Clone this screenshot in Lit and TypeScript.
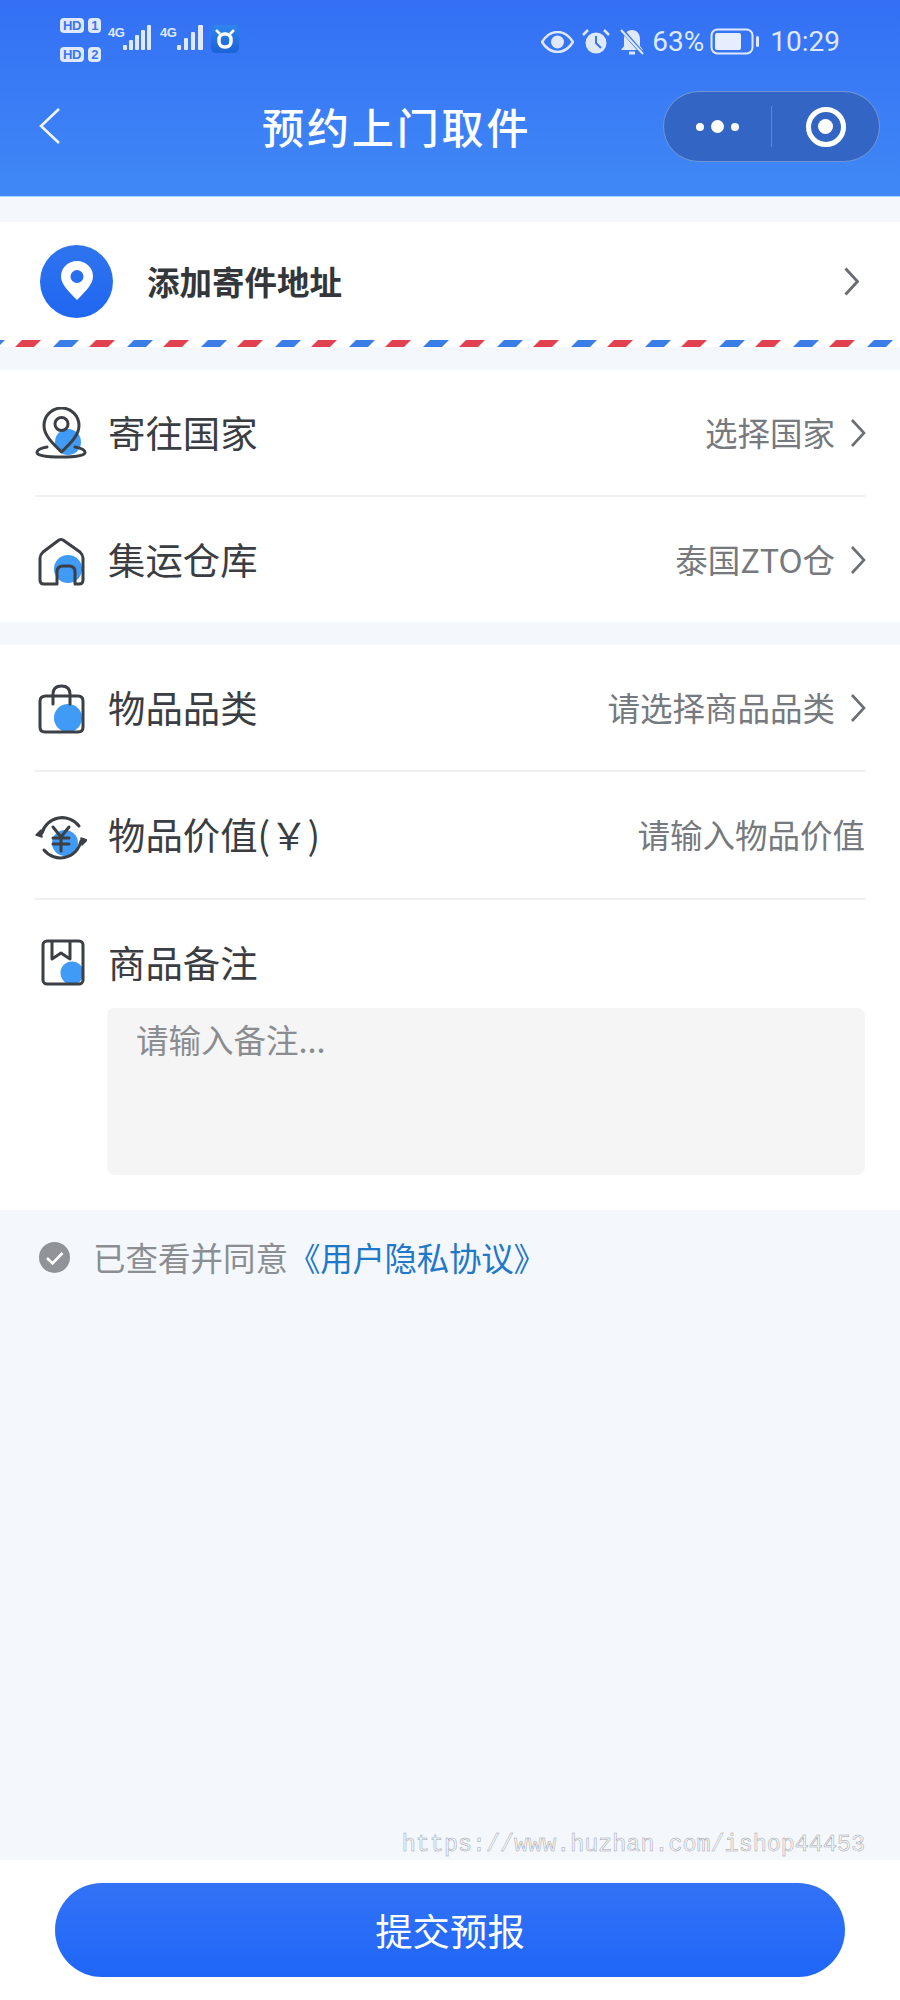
import { LitElement, html, css, svg } from "lit";
import { customElement } from "lit/decorators.js";

const BLUE = "#3f9bf5";
const INK = "#3c3f44";
const PALE = "#dfe9fb";

const chevron = html`<svg class="chev" width="16" height="30" viewBox="0 0 16 30"><path d="M2 2l12 13L2 28" fill="none" stroke="#6b6e72" stroke-width="2.600"/></svg>`;

const icon = (inner: unknown) => html`<svg class="ico" width="52" height="52" viewBox="0 0 52 52" fill="none" stroke="${INK}" stroke-width="3" stroke-linejoin="round" stroke-linecap="round">${inner}</svg>`;

const icons = {
  pin: icon(svg`<circle cx="33" cy="35" r="13" fill="${BLUE}" stroke="none"/>
    <path d="M26.500 45C17 36 9 28 9 18.500a17.500 17.500 0 0 1 35 0C44 28 36 36 26.500 45Z"/>
    <circle cx="26.500" cy="17" r="6.500"/>
    <path d="M12 40C6 41 2 43 2 45.500 2 48.500 12 50 26 50s24-1.500 24-4.500c0-2.500-4-4.500-10-5.500"/>`),
  house: icon(svg`<circle cx="33" cy="35" r="14" fill="${BLUE}" stroke="none"/>
    <path d="M5 46V24q0-3 3-6L24 6q2-1 4 0l17 12q3 3 3 6v22q0 4-4 4h-4V38q0-6-6-6h-6q-6 0-6 6v12H9q-4 0-4-4Z"/>`),
  bag: icon(svg`<circle cx="33" cy="36" r="14" fill="${BLUE}" stroke="none"/>
    <path d="M11 14h32q5 0 5 5v26q0 5-5 5H10q-5 0-5-5V19q0-5 6-5Z"/>
    <path d="M18 22V12q0-8 8.500-8T35 12v10"/>`),
  yuan: icon(svg`<circle cx="30" cy="34" r="13" fill="${BLUE}" stroke="none"/>
    <path d="M7 24A21 21 0 0 1 44 17"/><path d="M46 32A21 21 0 0 1 9 41"/>
    <path d="M1 26l5-5 1 7Z" fill="${INK}" stroke-width="1.500"/><path d="M52 31l-5 5-1-7Z" fill="${INK}" stroke-width="1.500"/>
    <path d="M18 18l8 10 8-10M26 28v14M18 29h16M18 35h16"/>`),
  note: icon(svg`<circle cx="37" cy="36" r="11.500" fill="${BLUE}" stroke="none"/>
    <rect x="8" y="4" width="40" height="43" rx="4"/>
    <path d="M17 5v17l9-6 9 6V5"/>`),
};

const bars = (items: [number, number, number][], w: number) => html`<svg width="${w}" height="28" viewBox="0 0 ${w} 28" fill="${PALE}">
  ${items.map(([x, bw, h]) => svg`<rect x="${x}" y="${26 - h}" width="${bw}" height="${h}" rx="1"/>`)}
</svg>`;

@customElement("app-root")
export class AppRoot extends LitElement {
  static styles = css`
    :host { display: block; width: 900px; height: 2000px; font-family: "Noto Sans CJK SC", "Noto Sans", sans-serif; }
    .page { height: 2000px; display: flex; flex-direction: column; background: #f4f7fb; color: #33363a; }
    .head { height: 197px; box-sizing: border-box; background: linear-gradient(180deg, #3370f4, #4088f6); border-bottom: 1px solid #a9d4fb; color: #fff; display: flex; flex-direction: column; }
    .status { height: 91px; box-sizing: border-box; padding: 18px 60px 0 60px; display: flex; justify-content: space-between; align-items: flex-start; color: #dfe9fb; }
    .sl, .sr { display: flex; align-items: flex-start; }
    .sr { align-items: center; }
    .hds { display: flex; flex-direction: column; gap: 14px; width: 48px; }
    .hdr { display: flex; gap: 4px; }
    .pill { font: 700 13px/15px "Liberation Sans", sans-serif; letter-spacing: -.3px; background: #dfe9fb; color: #3a76f0; border-radius: 4px; padding: 0 3px; height: 15px; }
    .net { display: flex; position: relative; width: 44px; height: 30px; margin: 6px 8px 0 0; justify-content: flex-end; }
    .net b { position: absolute; left: 0; top: 2px; font: 700 13px/13px "Liberation Sans", sans-serif; letter-spacing: -.6px; color: #dfe9fb; }
    .app { width: 28px; height: 28px; border-radius: 5px; background: linear-gradient(180deg, #2f86ee, #1a62d6); display: flex; align-items: center; justify-content: center; margin: 7px 0 0 -1px; }
    .sr { margin-top: 7px; height: 34px; font: 400 28px/34px Roboto, sans-serif; color: #dfe9fb; }
    .nav { flex: 1; display: grid; grid-template-columns: 224px auto 1fr; align-items: flex-start; padding: 0 20px 0 38px; }
    .back { margin-top: 16px; }
    .title { font-size: 42px; line-height: 56px; font-weight: 500; letter-spacing: 2.900px; margin-top: 7px; }
    .capsule { justify-self: end; width: 217px; height: 71px; box-sizing: border-box; border-radius: 36px; background: #3366c4; border: 1px solid rgba(255,255,255,.3); display: flex; align-items: center; }
    .capsule > div { flex: 1; display: flex; align-items: center; justify-content: center; gap: 7px; }
    .capsule .sep { flex: none; width: 1px; height: 41px; background: rgba(255,255,255,.22); }
    .dot { width: 8px; height: 8px; border-radius: 50%; background: #fff; }
    .dot.big { width: 13px; height: 13px; }
    .ring { width: 40px; height: 40px; box-sizing: border-box; border-radius: 50%; border: 5px solid #fff; display: flex; align-items: center; justify-content: center; }
    .ring i { width: 15px; height: 15px; border-radius: 50%; background: #fff; }
    .addr { margin-top: 25px; background: #fff; }
    .addr-row { height: 118px; box-sizing: border-box; display: flex; align-items: center; padding: 0 41px 0 40px; }
    .addr-ic { width: 73px; height: 73px; border-radius: 50%; background: linear-gradient(180deg, #2f74ee, #1f66f2); display: flex; align-items: center; justify-content: center; margin-right: 34px; }
    .addr-t { flex: 1; font-size: 32.500px; font-weight: 700; line-height: 40px; color: #33363a; }
    .stripe { display: block; }
    .sec { background: #fff; padding: 0 35px; }
    .s1 { margin-top: 23px; }
    .s2 { margin-top: 23px; height: 565px; box-sizing: border-box; }
    .row { height: 127px; box-sizing: border-box; border-bottom: 2px solid #eef0f2; display: flex; align-items: center; }
    .row.last { border-bottom: none; height: 125px; }
    .row.mid { height: 128px; }
    .lab { margin: 0 0 2px 21px; flex: 1; font-size: 37.400px; line-height: 50px; color: #3a3d41; }
    .val { margin-bottom: 2px; font-size: 32.500px; line-height: 44px; color: #76797d; }
    .chev { margin-left: 15px; margin-right: -1px; }
    .note-top { height: 108px; display: flex; align-items: center; padding-top: 18px; box-sizing: border-box; }
    .ta { margin-left: 72px; height: 167px; box-sizing: border-box; border-radius: 8px; background: #f5f5f6; padding: 9px 29px; font-size: 32.500px; line-height: 44px; color: #8a8c90; }
    .agree { margin: 28px 0 0 39px; display: flex; align-items: center; height: 38px; }
    .agree .tick { margin-right: 23px; }
    .agree span { font-size: 32.500px; line-height: 38px; color: #8b8e92; white-space: nowrap; }
    .agree em { font-style: normal; color: #1f78c8; font-size: 32.500px; line-height: 38px; white-space: nowrap; letter-spacing: -.3px; }
    .spacer { flex: 1; display: flex; align-items: flex-end; justify-content: flex-end; padding: 0 35px 0 0; }
    .mark { font: 400 23.400px/34px "Liberation Mono", monospace; color: #f4f7fb; -webkit-text-stroke: .5px #a2a5a9; margin-bottom: -2px; }
    .foot { height: 140px; box-sizing: border-box; background: #fff; padding: 23px 55px 0; }
    .btn { height: 94px; border-radius: 47px; background: linear-gradient(180deg, #3372f6, #1f66f8); display: flex; align-items: center; justify-content: center; color: #fff; font-size: 37.400px; }
  `;

  render() {
    return html`<div class="page">
      <div class="head">
        <div class="status">
          <div class="sl">
            <div class="hds">
              <div class="hdr"><span class="pill">HD</span><span class="pill">1</span></div>
              <div class="hdr"><span class="pill">HD</span><span class="pill">2</span></div>
            </div>
            <div class="net"><b>4G</b>${bars([[3, 4, 5], [9, 4, 10], [15, 4, 15], [21, 4, 20], [27, 4, 25]], 32)}</div>
            <div class="net"><b>4G</b>${bars([[5, 4, 5], [12, 4, 12], [19, 4, 18], [26, 5, 25]], 32)}</div>
            <div class="app"><svg width="22" height="22" viewBox="0 0 22 22" fill="none" stroke="#fff" stroke-width="3.500"><rect x="5" y="6" width="12" height="13" rx="5.500"/><path d="M2 2l4 4M20 2l-4 4" stroke-width="2.500"/></svg></div>
          </div>
          <div class="sr">
            <svg width="33" height="22" viewBox="0 0 33 22" style="margin-right:8px"><path d="M1 11C6 3 12 1 16.500 1S27 3 32 11c-5 8-11 10-15.500 10S6 19 1 11Z" fill="none" stroke="#dfe9fb" stroke-width="2.500"/><circle cx="16.500" cy="11" r="6.500" fill="#dfe9fb"/></svg>
            <svg width="28" height="28" viewBox="0 0 28 28" style="margin-right:9px"><circle cx="14" cy="15" r="10.500" fill="#dfe9fb"/><path d="M14 8v7l5 5" fill="none" stroke="#3a76f0" stroke-width="2"/><path d="M1 7l5-5M27 7l-5-5" stroke="#dfe9fb" stroke-width="2.500"/></svg>
            <svg width="26" height="28" viewBox="0 0 26 28" style="margin-right:7px"><path d="M13 2c5 0 8 4 8 9v7l3 4H2l3-4v-7c0-5 3-9 8-9Z" fill="#dfe9fb"/><path d="M10 25h6" stroke="#dfe9fb" stroke-width="3"/><path d="M2 1l22 25" stroke="#3a76f0" stroke-width="4"/><path d="M2 2l22 24" stroke="#dfe9fb" stroke-width="2"/></svg>
            <span>63%</span>
            <svg width="50" height="28" viewBox="0 0 50 28" style="margin:0 10px 0 6px"><rect x="1.500" y="1.500" width="41" height="24" rx="6" fill="none" stroke="#dfe9fb" stroke-width="2"/><rect x="5" y="5" width="26" height="17" rx="2" fill="#e6edfc"/><rect x="46" y="8" width="3" height="11" rx="1.500" fill="#dfe9fb"/></svg>
            <span>10:29</span>
          </div>
        </div>
        <div class="nav">
          <svg class="back" width="24" height="38" viewBox="0 0 24 38"><path d="M21 2L3 19l18 17" fill="none" stroke="#f1f5fe" stroke-width="2.600"/></svg>
          <div class="title">预约上门取件</div>
          <div class="capsule">
            <div><i class="dot"></i><i class="dot big"></i><i class="dot"></i></div>
            <div class="sep"></div>
            <div><span class="ring"><i></i></span></div>
          </div>
        </div>
      </div>

      <div class="addr">
        <div class="addr-row">
          <div class="addr-ic"><svg width="32" height="40" viewBox="0 0 32 40"><path fill-rule="evenodd" d="M16 39C7 30 0 23 0 15.500a16 15.500 0 0 1 32 0C32 23 25 30 16 39ZM16 9a6.500 6.500 0 1 0 0 13 6.500 6.500 0 0 0 0-13Z" fill="#fff"/></svg></div>
          <div class="addr-t">添加寄件地址</div>
          <svg width="15" height="29" viewBox="0 0 15 29"><path d="M1.500 1.500L13.500 14.500 1.500 27.500" fill="none" stroke="#6b6e72" stroke-width="3"/></svg>
        </div>
        <svg class="stripe" width="900" height="7" viewBox="0 0 900 7">
          <defs><pattern id="air" x="0" width="74" height="7" patternUnits="userSpaceOnUse">
            <path d="M15 7L22 0H41L34 7Z" fill="#e2424f"/>
            <path d="M53 7L60 0H79L72 7Z" fill="#3b7de6"/>
            <path d="M-21 7L-14 0H5L-2 7Z" fill="#3b7de6"/>
          </pattern></defs>
          <rect width="900" height="7" fill="url(#air)"/>
        </svg>
      </div>

      <div class="sec s1">
        <div class="row">${icons.pin}<div class="lab">寄往国家</div><div class="val">选择国家</div>${chevron}</div>
        <div class="row last">${icons.house}<div class="lab">集运仓库</div><div class="val">泰国ZTO仓</div>${chevron}</div>
      </div>

      <div class="sec s2">
        <div class="row">${icons.bag}<div class="lab">物品品类</div><div class="val">请选择商品品类</div>${chevron}</div>
        <div class="row mid">${icons.yuan}<div class="lab">物品价值(￥)</div><div class="val">请输入物品价值</div></div>
        <div class="note-top">${icons.note}<div class="lab">商品备注</div></div>
        <div class="ta">请输入备注...</div>
      </div>

      <div class="agree">
        <svg class="tick" width="31" height="31" viewBox="0 0 31 31"><circle cx="15.500" cy="15.500" r="15.500" fill="#909398"/><path d="M8 16l5.500 5.500L23.500 11" fill="none" stroke="#fff" stroke-width="2.600"/></svg>
        <span>已查看并同意</span><em>《用户隐私协议》</em>
      </div>

      <div class="spacer"><div class="mark">https://www.huzhan.com/ishop44453</div></div>

      <div class="foot"><div class="btn">提交预报</div></div>
    </div>`;
  }
}
